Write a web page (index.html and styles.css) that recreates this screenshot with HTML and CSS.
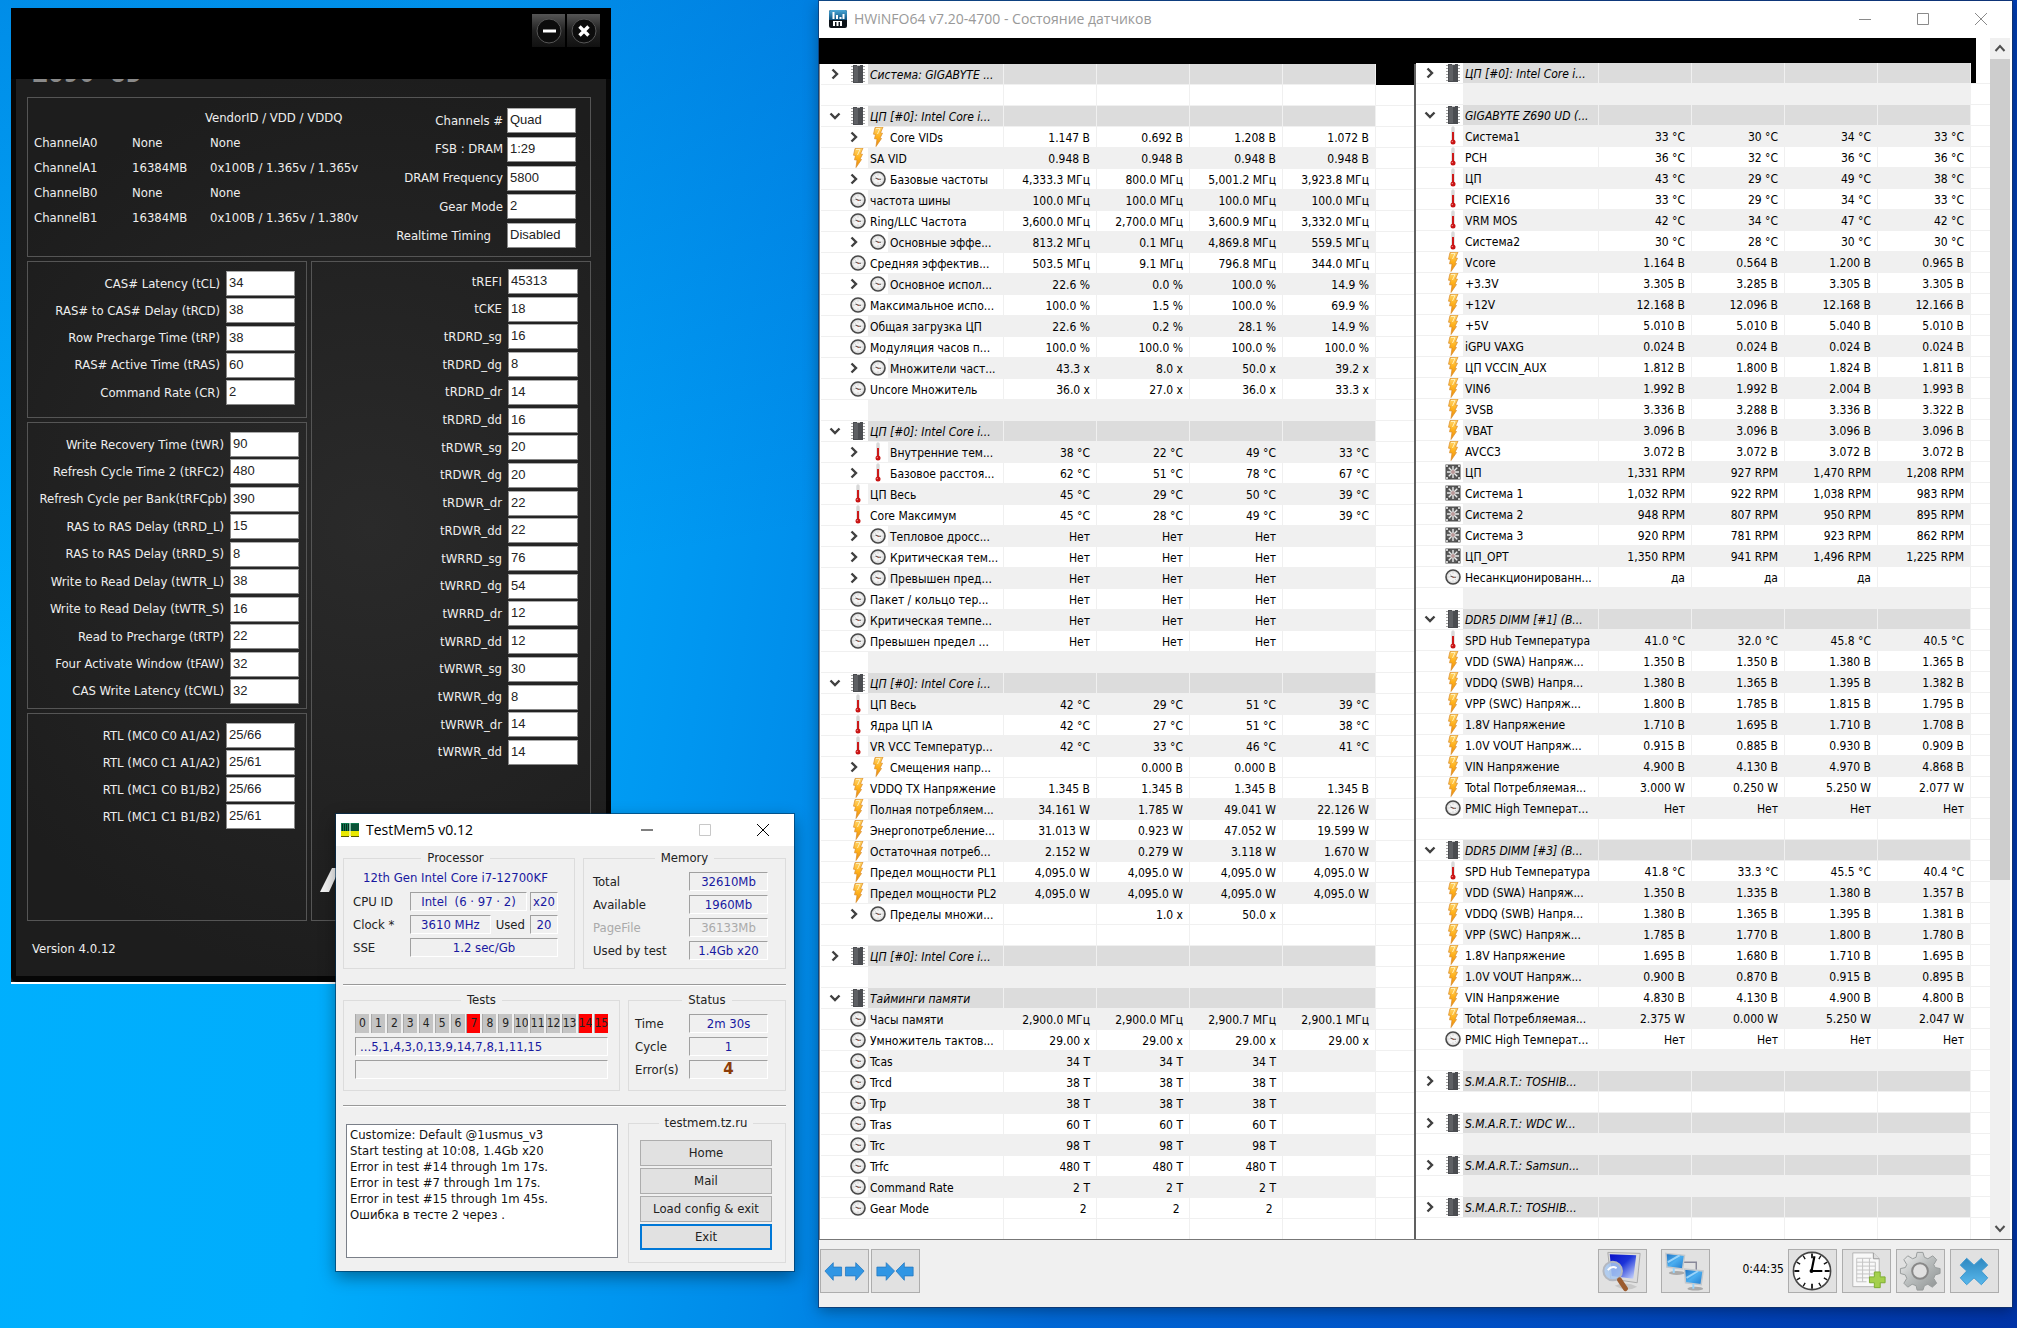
FILE: index.html
```html
<!DOCTYPE html>
<html lang="ru">
<head>
<meta charset="utf-8">
<title>HWiNFO64 v7.20-4700 - Состояние датчиков</title>
<link rel="stylesheet" href="styles.css">
</head>
<body>
<svg class="defs" aria-hidden="true">
  <defs>
    <linearGradient id="gold" x1="0" y1="0" x2="0" y2="1"><stop offset="0" stop-color="#ffd46a"/><stop offset=".5" stop-color="#ffb21c"/><stop offset="1" stop-color="#e88a10"/></linearGradient>
    <linearGradient id="sky" x1="0" y1="0" x2="1" y2="1"><stop offset="0" stop-color="#1d6fc0"/><stop offset=".5" stop-color="#4aaef0"/><stop offset="1" stop-color="#1f78cc"/></linearGradient>
    <linearGradient id="deep" x1="0" y1="0" x2="1" y2="1"><stop offset="0" stop-color="#0a10c8"/><stop offset=".45" stop-color="#1c34d8"/><stop offset="1" stop-color="#d8e4ff"/></linearGradient>
    <linearGradient id="steel" x1="0" y1="0" x2="1" y2="1"><stop offset="0" stop-color="#f4f4f4"/><stop offset=".5" stop-color="#b8bcbc"/><stop offset="1" stop-color="#8c9090"/></linearGradient>
    <linearGradient id="cross" x1="0" y1="0" x2="0" y2="1"><stop offset="0" stop-color="#2f88c0"/><stop offset="1" stop-color="#58b8ec"/></linearGradient>
    <linearGradient id="logo" x1="0" y1="0" x2="0" y2="1"><stop offset="0" stop-color="#4aa8d8"/><stop offset="1" stop-color="#0c4f7c"/></linearGradient>
  </defs>
  <symbol id="chip" viewBox="0 0 16 20"><path d="M1 2.500h14M1 5.500h14M1 8.500h14M1 11.500h14M1 14.500h14M1 17.500h14" stroke="#a4a4a4" stroke-width="1.200"/><rect x="3" y="1" width="10" height="18" fill="#4a4c50"/><rect x="4" y="2" width="4" height="16" fill="#5e6064"/><path d="M7 1h3v1H7z" fill="#ccc"/></symbol>
  <symbol id="bolt" viewBox="0 0 16 20"><path d="M5 .5 13 0l-2.500 6 2 .2-2.500 5 1.500.3L6 19.500 7 12l-2.500-.2L5.500 7.500 3.500 7.200z" fill="url(#gold)" stroke="#d98a28" stroke-width=".7"/><path d="M6 1.500h4L7.500 7" stroke="#fff0b8" fill="none"/></symbol>
  <symbol id="temp" viewBox="0 0 16 20"><path d="M8 2v11" stroke="#d8d8d8" stroke-width="3.400" stroke-linecap="round"/><path d="M8 6v10" stroke="#cc1818" stroke-width="2"/><circle cx="8" cy="16" r="2.500" fill="#c81414"/><circle cx="7.300" cy="15.500" r=".7" fill="#f08080"/></symbol>
  <symbol id="gauge" viewBox="0 0 16 16"><circle cx="8" cy="8" r="7" fill="#dcdcdc" stroke="#484848" stroke-width="1.600"/><circle cx="8" cy="8" r="5" fill="#f4f4f4"/><path d="M8 3.500v1M8 11.500v1M3.500 8h1M11.500 8h1M4.800 4.800l.7.700M10.500 10.500l.7.700" stroke="#aaa" stroke-width=".8"/><path d="m5.500 7 3 1.300h2.500" stroke="#555" fill="none" stroke-width="1.100"/><path d="m7.500 8 1.200.5" stroke="#c84020"/></symbol>
  <symbol id="fan" viewBox="0 0 16 16"><rect x=".5" y=".5" width="15" height="15" fill="#484848"/><circle cx="8" cy="8" r="7" fill="#5a5a5a"/><path d="M8 2v12M2 8h12M3.800 3.800l8.400 8.400M12.200 3.800l-8.400 8.400" stroke="#ececec" stroke-width="1.400"/><circle cx="8" cy="8" r="2" fill="#b89898"/><path d="M1 1h2v2H1zM13 1h2v2h-2zM1 13h2v2H1zM13 13h2v2h-2z" fill="#ccc"/></symbol>
  <symbol id="closed" viewBox="0 0 14 14"><path d="m4.500 2.500 4.500 4.500-4.500 4.500" fill="none" stroke="#404040" stroke-width="2.400"/></symbol>
  <symbol id="open" viewBox="0 0 14 14"><path d="m2.500 4.500 4.500 4.500 4.500-4.500" fill="none" stroke="#404040" stroke-width="2.400"/></symbol>
</svg>

<main class="desktop">

<section class="timing">
  <header class="timing-bar">
    <button class="gloss" aria-label="Minimize"><svg viewBox="0 0 33 32"><circle cx="17" cy="16" r="12" fill="#0c0c0c" stroke="#555"/><path d="M11 16h13" stroke="#fff" stroke-width="3"/></svg></button>
    <button class="gloss" aria-label="Close"><svg viewBox="0 0 33 32"><circle cx="17" cy="16" r="12" fill="#0c0c0c" stroke="#555"/><path d="m12.500 11.500 9 9m0-9-9 9" stroke="#fff" stroke-width="3.400"/></svg></button>
  </header>
  <div class="timing-body">
    <div class="board"><span>Z690 UD</span></div>
    <div class="panel slots">
      <div class="modules">
        <span></span><span></span><span class="vendor">VendorID / VDD / VDDQ</span>
        <span>ChannelA0</span><span>None</span><span>None</span>
        <span>ChannelA1</span><span>16384MB</span><span>0x100B / 1.365v / 1.365v</span>
        <span>ChannelB0</span><span>None</span><span>None</span>
        <span>ChannelB1</span><span>16384MB</span><span>0x100B / 1.365v / 1.380v</span>
      </div>
      <div class="fields mode">
        <label><span>Channels #</span><input readonly value="Quad"></label>
        <label><span>FSB : DRAM</span><input readonly value="1:29"></label>
        <label><span>DRAM Frequency</span><input readonly value="5800"></label>
        <label><span>Gear Mode</span><input readonly value="2"></label>
        <label class="inset"><span>Realtime Timing</span><input readonly value="Disabled"></label>
      </div>
    </div>
    <div class="columns">
      <div class="column">
        <div class="panel fields primary">
          <label><span>CAS# Latency (tCL)</span><input readonly value="34"></label>
          <label><span>RAS# to CAS# Delay (tRCD)</span><input readonly value="38"></label>
          <label><span>Row Precharge Time (tRP)</span><input readonly value="38"></label>
          <label><span>RAS# Active Time (tRAS)</span><input readonly value="60"></label>
          <label><span>Command Rate (CR)</span><input readonly value="2"></label>
        </div>
        <div class="panel fields secondary">
          <label><span>Write Recovery Time (tWR)</span><input readonly value="90"></label>
          <label><span>Refresh Cycle Time 2 (tRFC2)</span><input readonly value="480"></label>
          <label class="tight"><span>Refresh Cycle per Bank(tRFCpb)</span><input readonly value="390"></label>
          <label><span>RAS to RAS Delay (tRRD_L)</span><input readonly value="15"></label>
          <label><span>RAS to RAS Delay (tRRD_S)</span><input readonly value="8"></label>
          <label><span>Write to Read Delay (tWTR_L)</span><input readonly value="38"></label>
          <label><span>Write to Read Delay (tWTR_S)</span><input readonly value="16"></label>
          <label><span>Read to Precharge (tRTP)</span><input readonly value="22"></label>
          <label><span>Four Activate Window (tFAW)</span><input readonly value="32"></label>
          <label><span>CAS Write Latency (tCWL)</span><input readonly value="32"></label>
        </div>
        <div class="panel fields rtl">
          <label><span>RTL (MC0 C0 A1/A2)</span><input readonly value="25/66"></label>
          <label><span>RTL (MC0 C1 A1/A2)</span><input readonly value="25/61"></label>
          <label><span>RTL (MC1 C0 B1/B2)</span><input readonly value="25/66"></label>
          <label><span>RTL (MC1 C1 B1/B2)</span><input readonly value="25/61"></label>
        </div>
      </div>
      <div class="panel turnaround">
        <div class="fields">
          <label><span>tREFI</span><input readonly value="45313"></label>
          <label><span>tCKE</span><input readonly value="18"></label>
          <label><span>tRDRD_sg</span><input readonly value="16"></label>
          <label><span>tRDRD_dg</span><input readonly value="8"></label>
          <label><span>tRDRD_dr</span><input readonly value="14"></label>
          <label><span>tRDRD_dd</span><input readonly value="16"></label>
          <label><span>tRDWR_sg</span><input readonly value="20"></label>
          <label><span>tRDWR_dg</span><input readonly value="20"></label>
          <label><span>tRDWR_dr</span><input readonly value="22"></label>
          <label><span>tRDWR_dd</span><input readonly value="22"></label>
          <label><span>tWRRD_sg</span><input readonly value="76"></label>
          <label><span>tWRRD_dg</span><input readonly value="54"></label>
          <label><span>tWRRD_dr</span><input readonly value="12"></label>
          <label><span>tWRRD_dd</span><input readonly value="12"></label>
          <label><span>tWRWR_sg</span><input readonly value="30"></label>
          <label><span>tWRWR_dg</span><input readonly value="8"></label>
          <label><span>tWRWR_dr</span><input readonly value="14"></label>
          <label><span>tWRWR_dd</span><input readonly value="14"></label>
        </div>
        <svg class="brand" viewBox="0 0 40 24" aria-hidden="true"><path d="M0 24 12 0h8L9 24z" fill="#f4f4f4"/></svg>
      </div>
    </div>
    <footer class="version">Version 4.0.12</footer>
  </div>
</section>

<section class="testmem">
  <header class="titlebar">
    <svg class="ram" viewBox="0 0 18 14"><path d="M0 0h8.500v8H0zM9.500 0H18v8H9.500z" fill="#0f7a50"/><path d="M1.500 1v7M3.500 1v7M5.500 1v7M7.500 1v7M11 1v7M13 1v7M15 1v7M17 1v7" stroke="#062c1e"/><path d="M0 8h8.500v5H0zM9.500 8H18v5H9.500z" fill="#e8e800"/><path d="M0 13.500h8M10 13.500h8" stroke="#5a5a00"/></svg>
    <h2>TestMem5 v0.12</h2>
    <button aria-label="Minimize"><svg viewBox="0 0 12 12"><path d="M0 6h12" stroke="#000"/></svg></button>
    <button aria-label="Maximize" disabled><svg viewBox="0 0 12 12"><path d="M.5.5h11v11H.5z" stroke="#c8c8c8" fill="none"/></svg></button>
    <button aria-label="Close"><svg viewBox="0 0 12 12"><path d="m0 0 12 12M12 0 0 12" stroke="#000"/></svg></button>
  </header>
  <div class="tm-body">
    <div class="tm-row info">
      <fieldset class="cpu">
        <legend>Processor</legend>
        <output class="model">12th Gen Intel Core i7-12700KF</output>
        <div class="line"><span class="key">CPU ID</span><output class="well grow">Intel&nbsp; (6 · 97 · 2)</output><output class="well small">x20</output></div>
        <div class="line"><span class="key">Clock *</span><output class="well grow">3610 MHz</output><span class="used">Used</span><output class="well small">20</output></div>
        <div class="line"><span class="key">SSE</span><output class="well grow">1.2 sec/Gb</output></div>
      </fieldset>
      <fieldset class="mem">
        <legend>Memory</legend>
        <div class="line"><span class="key">Total</span><output class="well">32610Mb</output></div>
        <div class="line"><span class="key">Available</span><output class="well">1960Mb</output></div>
        <div class="line off"><span class="key">PageFile</span><output class="well">36133Mb</output></div>
        <div class="line"><span class="key">Used by test</span><output class="well">1.4Gb x20</output></div>
      </fieldset>
    </div>
    <hr>
    <div class="tm-row runs">
      <fieldset class="tests">
        <legend>Tests</legend>
        <div class="cells"><span>0</span><span>1</span><span>2</span><span>3</span><span>4</span><span>5</span><span>6</span><span class="bad">7</span><span>8</span><span>9</span><span>10</span><span>11</span><span>12</span><span>13</span><span class="bad">14</span><span class="bad">15</span></div>
        <output class="well seq">...5,1,4,3,0,13,9,14,7,8,1,11,15</output>
        <output class="well"></output>
      </fieldset>
      <fieldset class="status">
        <legend>Status</legend>
        <div class="line"><span class="key">Time</span><output class="well">2m 30s</output></div>
        <div class="line"><span class="key">Cycle</span><output class="well">1</output></div>
        <div class="line"><span class="key">Error(s)</span><output class="well errors">4</output></div>
      </fieldset>
    </div>
    <hr>
    <div class="tm-row tail">
      <textarea class="log" readonly aria-label="Log">Customize: Default @1usmus_v3
Start testing at 10:08, 1.4Gb x20
Error in test #14 through 1m 17s.
Error in test #7 through 1m 17s.
Error in test #15 through 1m 45s.
Ошибка в тесте 2 через .</textarea>
      <fieldset class="links">
        <legend>testmem.tz.ru</legend>
        <button>Home</button>
        <button>Mail</button>
        <button>Load config &amp; exit</button>
        <button class="default">Exit</button>
      </fieldset>
    </div>
  </div>
</section>

<section class="hwinfo">
  <header class="titlebar">
    <svg class="app" viewBox="0 0 18 18"><rect width="18" height="18" rx="2" fill="#0c1218"/><path d="M2 0h14a2 2 0 0 1 2 2v8H0V2a2 2 0 0 1 2-2z" fill="url(#logo)"/><path d="M4.500 2v7M8 5v4M11.500 7v2M14.500 4v5M5 12v4M8.500 12v4M12 12v4" stroke="#fff" stroke-width="2"/><path d="M4 11.500h9" stroke="#fff"/></svg>
    <h2>HWiNFO64 v7.20-4700 - Состояние датчиков</h2>
    <button aria-label="Minimize"><svg viewBox="0 0 12 12"><path d="M0 6.500h12" stroke="#8a8a8a"/></svg></button>
    <button aria-label="Maximize"><svg viewBox="0 0 12 12"><path d="M.5.5h11v11H.5z" stroke="#8a8a8a" fill="none"/></svg></button>
    <button aria-label="Close"><svg viewBox="0 0 12 12"><path d="m0 0 12 12M12 0 0 12" stroke="#8a8a8a"/></svg></button>
  </header>
  <div class="panes">
    <div class="pane first"><div class="mask"></div><table id="sensors-left"></table></div>
    <div class="pane second"><div class="mask"></div><table id="sensors-right"></table></div>
    <div class="scroll">
      <svg viewBox="0 0 20 21"><path d="m5.500 13 4.500-5 4.500 5" stroke="#505050" stroke-width="2" fill="none"/></svg>
      <div class="thumb"></div>
      <svg viewBox="0 0 20 21"><path d="m5.500 8 4.500 5 4.500-5" stroke="#505050" stroke-width="2" fill="none"/></svg>
    </div>
  </div>
  <footer class="toolbar">
    <button aria-label="Expand columns"><svg viewBox="0 0 48 42"><path d="M4 21 12.500 12.500V17H21v9h-8.500v4.500zM44 21l-8.500-8.500V17H25v9h10.500v4.500z" fill="#3096e4" stroke="#2478c0" stroke-width=".8"/></svg></button>
    <button aria-label="Shrink columns"><svg viewBox="0 0 48 42"><path d="M23 21l-8.500-8.500V17H5v9h9.500v4.500zM24.500 21 33 12.500V17h9v9h-9v4.500z" fill="#3096e4" stroke="#2478c0" stroke-width=".8"/></svg></button>
    <span class="spring"></span>
    <button aria-label="Summary"><svg viewBox="0 0 48 42"><path d="M16 36q12-5 23 1-10 6-23-1z" fill="#c8c8c8"/><path d="m9 2 33 1-3 30-27-4z" fill="#dcdcdc" stroke="#aaa"/><path d="m11 4 27 1-3 24-22-3z" fill="url(#deep)"/><circle cx="14" cy="21" r="9.500" fill="#a8c8f0" fill-opacity=".85" stroke="#b4b8c0" stroke-width="2"/><path d="M9 20q4-5 9-2" stroke="#fff" fill="none" stroke-width="2"/><path d="m21 30 6 9" stroke="#9c5c30" stroke-width="5" stroke-linecap="round"/></svg></button>
    <button class="gap" aria-label="Network"><svg viewBox="0 0 48 42"><path d="M22 12h13v10" fill="none" stroke="#889" stroke-width="1.500"/><ellipse cx="15" cy="23" rx="8" ry="2" fill="#aaa"/><path d="m4 3 19 2-2 14-16-2z" fill="url(#sky)" stroke="#c4c8cc" stroke-width="1.500"/><path d="m6 12 12-7M12 18v5" stroke="#9ad4fa" stroke-width="2"/><ellipse cx="34" cy="39" rx="8" ry="2" fill="#aaa"/><path d="m23 19 19 2-2 14-16-2z" fill="url(#sky)" stroke="#c4c8cc" stroke-width="1.500"/><path d="m25 28 12-7M32 34v5" stroke="#9ad4fa" stroke-width="2"/></svg></button>
    <time class="uptime">0:44:35</time>
    <button aria-label="Reset clock"><svg viewBox="0 0 48 42"><circle cx="23.500" cy="21" r="19" fill="#fff" stroke="#444" stroke-width="1.600"/><g stroke="#111" stroke-width="1.800"><path d="M23.500 3v5M23.500 34v5M5.500 21h5M36.500 21h5"/><path d="m14.500 5.400 2 3.500M30.500 33.100l2 3.500M7.900 12l3.500 2M35.600 28l3.500 2M32.500 5.400l-2 3.500M16.500 33.100l-2 3.500M39.100 12l-3.500 2M11.400 28l-3.500 2" stroke-width="1.400"/></g><path d="M23 21 26 6M23 21h11" stroke="#000" stroke-width="2.200"/><circle cx="23" cy="21" r="2"/></svg></button>
    <button aria-label="Log to file"><svg viewBox="0 0 48 42"><path d="M10 2.500h21l6 6V37H10z" fill="#f8f8f8" stroke="#b4b4b4"/><path d="M31 2.500v6h6" fill="#ddd" stroke="#999"/><path d="M14 8h15M14 12h19M14 16h19M14 20h19M14 24h19M14 28h19M14 32h10M14 8v24M20 8v24M27 8v20M33 12v16" stroke="#c4c4c4"/><path d="M32 22h6v5h5v6h-5v5h-6v-5h-5v-6h5z" fill="#a4d04c" stroke="#7cac30"/></svg></button>
    <button aria-label="Settings"><svg viewBox="0 0 48 42"><path d="m20.500 2 6 0 1.500 5 3.500 1.500 5-3 4 4-3 5 1.500 3 5 1v5l-5 1.500-1.500 3.500 3 5-4.500 4-4.500-3-3.500 1.500-1.500 4.500h-6l-1-4.500-4-1.500-4.500 3-4-4 3-5-1.500-3.500-5-1.500v-5l5-1 1.500-3-3-5 4-4 5 3L19.500 7z" fill="url(#steel)" stroke="#989c9c"/><circle cx="23.500" cy="21" r="8" fill="#e1e1e1" stroke="#888" stroke-width="2"/></svg></button>
    <button aria-label="Close sensors"><svg viewBox="0 0 48 42"><path d="m16 8 7.500 7L31 8l6.500 7-6.500 6 6.500 7-6.500 7-7.500-7-7.500 7-6.500-7 6.500-7-6.500-6z" fill="url(#cross)" stroke="#3c98d0"/></svg></button>
  </footer>
</section>

</main>
<script src="sensors.js"></script>
</body>
</html>
```
FILE: styles.css
```css
* { box-sizing: border-box; }

body {
  margin: 0;
  font: 12px/16px "DejaVu Sans Condensed", "DejaVu Sans", sans-serif;
  color: #000;
}

h2, hr, fieldset, legend, input, textarea, button { margin: 0; font: inherit; }
button { padding: 0; }
.defs { position: absolute; width: 0; height: 0; }

.desktop {
  position: relative;
  min-height: 100vh;
  overflow: hidden;
  background:
    linear-gradient(170deg, rgba(0, 60, 180, .3), rgba(0, 60, 180, 0) 40%),
    linear-gradient(98deg, #00b0fe 0, #00adfc 22%, #0096f0 36%, #008ae8 43%, #0068d6 56%, #0050c6 76%, #0034a8 100%);
}

/* ---- memory timing window ---- */
.timing {
  position: absolute;
  left: 11px;
  top: 8px;
  width: 600px;
  background: #1e1e1e;
  color: #eee;
  font-size: 13px;
  border-bottom: 2px solid #fff;
}
.timing-bar {
  display: flex;
  justify-content: flex-end;
  gap: 2px;
  height: 71px;
  padding: 6px 11px 0 0;
  background: #000;
}
.gloss {
  width: 33px;
  height: 33px;
  border: 0;
  background: linear-gradient(#555, #222 50%, #111);
}
.gloss svg { display: block; width: 33px; height: 32px; }
.timing-body {
  padding: 0 15px 10px 11px;
  border: solid #060606;
  border-width: 0 5px 6px;
  border-radius: 0 0 6px 6px;
  background: radial-gradient(circle at 60% 50%, #2a2a2a, #1d1d1d 80%);
}
.board { height: 18px; overflow: hidden; }
.board span {
  display: block;
  padding-left: 5px;
  margin-top: -18px;
  font: bold 26px/24px "DejaVu Sans Mono", monospace;
  color: #8a8a8a;
}
.panel { border: 1px solid #555; }
.slots { display: flex; justify-content: space-between; height: 160px; }
.modules {
  display: grid;
  grid-template-columns: 98px 78px 170px;
  grid-auto-rows: 25px;
  align-content: start;
  padding: 7px 0 0 6px;
  line-height: 25px;
  white-space: nowrap;
}
.vendor { margin-left: -5px; }
.fields { display: flex; flex-direction: column; justify-content: space-between; }
.fields label { display: flex; justify-content: flex-end; align-items: center; gap: 6px; white-space: nowrap; }
.fields input {
  width: 69px;
  height: 25px;
  padding: 0 2px 2px;
  border: 1px solid #888;
  border-top: 1px solid #aaa;
  background: #fff;
  color: #222;
  font: 13px/20px "Liberation Sans", sans-serif;
}
.mode { padding: 10px 14px 8px 0; }
.mode label { gap: 4px; }
.mode .inset { gap: 16px; }
.columns { display: grid; grid-template-columns: 280px 1fr; gap: 4px; padding-top: 4px; }
.column { display: flex; flex-direction: column; gap: 4px; }
.primary { height: 157px; padding: 9px 11px 12px 0; }
.secondary { height: 287px; padding: 9px 7px 4px 0; }
.secondary .tight { gap: 3px; }
.rtl { height: 208px; padding: 9px 11px 0 0; justify-content: flex-start; gap: 2px; }
.turnaround { position: relative; padding: 7px 12px 0 0; }
.turnaround .fields { height: 496px; }
.turnaround input { width: 70px; }
.brand { position: absolute; left: 8px; bottom: 28px; width: 40px; height: 24px; }
.version { padding: 20px 5px 9px; }

/* ---- shared window chrome ---- */
.titlebar { display: flex; align-items: center; background: #fff; }
.titlebar h2 { flex: 1; font-weight: 400; white-space: nowrap; }
.titlebar button { display: grid; place-items: center; border: 0; background: none; }
.titlebar button svg { width: 12px; height: 12px; }

/* ---- TestMem5 ---- */
.testmem {
  position: absolute;
  left: 336px;
  top: 814px;
  width: 458px;
  background: #f0f0f0;
  font-size: 13px;
  box-shadow: 0 0 0 1px rgba(0, 50, 90, .6), 0 6px 16px rgba(0, 0, 0, .4);
}
.testmem .titlebar { height: 32px; padding: 0 2px 0 5px; }
.testmem .titlebar h2 { padding-left: 7px; font: 14px/20px "Open Sans", sans-serif; }
.testmem .titlebar button { width: 58px; height: 32px; }
.ram { width: 18px; height: 14px; }
.tm-body { display: flex; flex-direction: column; padding: 4px 8px 8px 7px; color: #222; }
.tm-row { display: grid; gap: 8px; }
.info { grid-template-columns: 1fr 203px; height: 119px; }
.runs { grid-template-columns: 1fr 158px; height: 99px; }
.tail { grid-template-columns: 1fr 158px; height: 148px; }
.testmem hr { width: 100%; height: 2px; border: 0; border-top: 1px solid #999; border-bottom: 1px solid #fff; }
.info + hr { margin: 15px 0 6px; }
.runs + hr { margin: 14px 0 8px; }
.testmem fieldset {
  min-width: 0;
  padding: 0 9px;
  border: 1px solid #dcdcdc;
  display: flex;
  flex-direction: column;
  gap: 4px;
}
.testmem legend { margin: 0 auto; padding: 0 6px; }
.model { display: block; text-align: center; color: #1818a0; line-height: 20px; }
.line { display: flex; gap: 3px; align-items: center; }
.key { flex: none; width: 54px; }
.well {
  display: block;
  height: 19px;
  border: 1px solid;
  border-color: #a0a0a0 #fff #fff #a0a0a0;
  color: #1818a0;
  line-height: 17px;
  text-align: center;
  white-space: nowrap;
}
.grow { flex: 1; }
.small { width: 28px; }
.used { padding: 0 2px; }
.testmem .cpu { padding: 2px 16px 0 9px; }
.testmem .mem { padding: 6px 9px 0; }
.mem .key { width: 93px; }
.mem .well, .status .well { width: 79px; }
.off, .off .well { color: #aaa; }
.testmem .tests { padding: 6px 11px 0; }
.cells { display: grid; grid-template-columns: repeat(16, 14px); justify-content: space-between; height: 19px; }
.cells span { display: flex; justify-content: center; overflow: hidden; border-left: 1px solid #aaa; background: #c4c4c4; font-size: 12px; line-height: 19px; }
.cells .bad { background: #f00; }
.tests .seq { padding-left: 4px; text-align: left; }
.testmem .status { padding: 6px 6px 0; }
.status .key { width: 51px; }
.errors { font: bold 15px/17px "DejaVu Sans", sans-serif; color: #8c3c08; }
.log {
  margin: 9px 2px 5px 3px;
  padding: 2px 3px;
  border: 1px solid #7a7f88;
  background: #fff;
  color: #111;
  resize: none;
  overflow: hidden;
}
.testmem .links { padding: 9px 13px 0 11px; gap: 2px; }
.links button { flex: none; height: 26px; border: 1px solid #adadad; background: #e1e1e1; color: #222; }
.links .default { border: 2px solid #0078d7; }

/* ---- HWiNFO64 ---- */
.hwinfo {
  position: absolute;
  left: 819px;
  right: 5px;
  top: 1px;
  background: #f0f0f0;
  box-shadow: 0 0 0 1px rgba(20, 50, 100, .7), 0 4px 14px rgba(0, 0, 0, .35);
}
.hwinfo .titlebar { height: 37px; padding: 0 2px 2px 10px; }
.hwinfo .titlebar h2 { padding-left: 7px; font: 14px/20px "Open Sans", sans-serif; color: #999; }
.hwinfo .titlebar button { width: 58px; height: 35px; }
.app { width: 18px; height: 18px; }
.panes { display: flex; background: #fff; border-bottom: 1px solid #777; padding-right: 2px; }
.pane { min-width: 0; }
.first { flex: 593 1 0; border-left: 1px solid #888; padding-left: 1px; border-right: 2px solid #606060; }
.second { flex: 574 1 0; }
.first .mask { height: 26px; margin: 0 -2px; background: #000; }
.second .mask { height: 25px; margin-right: 14px; background: #000; }
.pane table { width: 100%; table-layout: fixed; border-collapse: separate; border-spacing: 0; }
.pane th, .pane td {
  height: 21px;
  padding: 2px 6px 0 0;
  border: solid #f0f0f0;
  border-width: 0 1px 1px 0;
  font-weight: 400;
  line-height: 18px;
  text-align: right;
  white-space: nowrap;
  overflow: hidden;
}
.pane .lead { border-right: 0; padding: 0 2px 0 0; background: #fff; }
.pane .rest { border-right: 0; background: #fff; }
.pane th { padding: 2px 0 0 2px; text-align: left; }
.stripe th, .stripe td { background: #f0f0f0; }
.head th, .head td { background: #dcdcdc; }
.head th { font-style: italic; }
.pane .nest th { padding-left: 0; }
.nest .pad { display: inline-block; width: 20px; height: 20px; margin: -2px 2px 0 0; padding-left: 2px; background: #fff; vertical-align: top; }
.lead div { display: flex; align-items: center; justify-content: flex-end; height: 20px; }
.head .lead div { justify-content: space-between; padding-left: 7px; }
.nest .lead div { padding-right: 5px; }
.c-lead { width: 47px; }
.c-name { width: 136px; }
.c-value { width: 93px; }
.glyph { display: block; width: 16px; height: 20px; }
.twist { display: block; width: 14px; height: 14px; }
.pane .end th, .pane .end td { border-bottom: 0; }
.first .end th, .first .end td { height: 20px; }
.first tr:first-child .rest { background: #000; border-bottom-color: #000; }
.second tr:first-child .rest { background: linear-gradient(90deg, #000 5px, #fff 5px); }
.scroll { display: flex; flex-direction: column; flex: none; width: 20px; background: #f0f0f0; }
.scroll svg { width: 20px; height: 21px; }
.thumb { height: 821px; margin-bottom: auto; background: #cdcdcd; }

.toolbar { display: flex; align-items: center; gap: 2px; height: 67px; padding: 0 13px 5px 1px; }
.toolbar button { width: 49px; height: 44px; border: 1px solid #adadad; background: #e1e1e1; }
.toolbar button svg { display: block; width: 47px; height: 42px; }
.toolbar .spring { flex: 1; }
.toolbar .gap { margin-left: 12px; }
.uptime { width: 74px; padding: 0 2px 4px 0; text-align: right; }
.uptime ~ button { margin-right: 3px; }
.uptime ~ button:last-child { margin-right: 0; }
```
FILE: sensors.js
```js
// Row notation: "flags|name|current|min|max|avg".
// Flags: > collapsed group, v expanded group, + nested sensor, = striped,
// b voltage/power, t temperature, c gauge, f fan; "-" is a spacer row.
const left = `>|Система: GIGABYTE ...
-
v|ЦП [#0]: Intel Core i...
+b|Core VIDs|1.147 В|0.692 В|1.208 В|1.072 В
=b|SA VID|0.948 В|0.948 В|0.948 В|0.948 В
+c|Базовые частоты|4,333.3 МГц|800.0 МГц|5,001.2 МГц|3,923.8 МГц
=c|частота шины|100.0 МГц|100.0 МГц|100.0 МГц|100.0 МГц
c|Ring/LLC Частота|3,600.0 МГц|2,700.0 МГц|3,600.9 МГц|3,332.0 МГц
=+c|Основные эффе...|813.2 МГц|0.1 МГц|4,869.8 МГц|559.5 МГц
c|Средняя эффектив...|503.5 МГц|9.1 МГц|796.8 МГц|344.0 МГц
=+c|Основное испол...|22.6 %|0.0 %|100.0 %|14.9 %
c|Максимальное испо...|100.0 %|1.5 %|100.0 %|69.9 %
=c|Общая загрузка ЦП|22.6 %|0.2 %|28.1 %|14.9 %
c|Модуляция часов п...|100.0 %|100.0 %|100.0 %|100.0 %
=+c|Множители част...|43.3 x|8.0 x|50.0 x|39.2 x
c|Uncore Множитель|36.0 x|27.0 x|36.0 x|33.3 x
=-
v|ЦП [#0]: Intel Core i...
=+t|Внутренние тем...|38 °C|22 °C|49 °C|33 °C
+t|Базовое расстоя...|62 °C|51 °C|78 °C|67 °C
=t|ЦП Весь|45 °C|29 °C|50 °C|39 °C
t|Core Максимум|45 °C|28 °C|49 °C|39 °C
=+c|Тепловое дросс...|Нет|Нет|Нет|
+c|Критическая тем...|Нет|Нет|Нет|
=+c|Превышен пред...|Нет|Нет|Нет|
c|Пакет / кольцо тер...|Нет|Нет|Нет|
=c|Критическая темпе...|Нет|Нет|Нет|
c|Превышен предел ...|Нет|Нет|Нет|
=-
v|ЦП [#0]: Intel Core i...
=t|ЦП Весь|42 °C|29 °C|51 °C|39 °C
t|Ядра ЦП IA|42 °C|27 °C|51 °C|38 °C
=t|VR VCC Температур...|42 °C|33 °C|46 °C|41 °C
+b|Смещения напр...||0.000 В|0.000 В|
b|VDDQ TX Напряжение|1.345 В|1.345 В|1.345 В|1.345 В
=b|Полная потребляем...|34.161 W|1.785 W|49.041 W|22.126 W
b|Энергопотребление...|31.013 W|0.923 W|47.052 W|19.599 W
=b|Остаточная потреб...|2.152 W|0.279 W|3.118 W|1.670 W
b|Предел мощности PL1|4,095.0 W|4,095.0 W|4,095.0 W|4,095.0 W
=b|Предел мощности PL2|4,095.0 W|4,095.0 W|4,095.0 W|4,095.0 W
+c|Пределы множи...||1.0 x|50.0 x|
-
>|ЦП [#0]: Intel Core i...
=-
v|Тайминги памяти
=c|Часы памяти|2,900.0 МГц|2,900.0 МГц|2,900.7 МГц|2,900.1 МГц
c|Умножитель тактов...|29.00 x|29.00 x|29.00 x|29.00 x
=c|Tcas|34 T|34 T|34 T|
c|Trcd|38 T|38 T|38 T|
=c|Trp|38 T|38 T|38 T|
c|Tras|60 T|60 T|60 T|
=c|Trc|98 T|98 T|98 T|
c|Trfc|480 T|480 T|480 T|
=c|Command Rate|2 T|2 T|2 T|
c|Gear Mode|2&nbsp;|2&nbsp;|2&nbsp;|
-`;

const right = `>|ЦП [#0]: Intel Core i...
=-
v|GIGABYTE Z690 UD (...
=t|Система1|33 °C|30 °C|34 °C|33 °C
t|PCH|36 °C|32 °C|36 °C|36 °C
=t|ЦП|43 °C|29 °C|49 °C|38 °C
t|PCIEX16|33 °C|29 °C|34 °C|33 °C
=t|VRM MOS|42 °C|34 °C|47 °C|42 °C
t|Система2|30 °C|28 °C|30 °C|30 °C
=b|Vcore|1.164 В|0.564 В|1.200 В|0.965 В
b|+3.3V|3.305 В|3.285 В|3.305 В|3.305 В
=b|+12V|12.168 В|12.096 В|12.168 В|12.166 В
b|+5V|5.010 В|5.010 В|5.040 В|5.010 В
=b|iGPU VAXG|0.024 В|0.024 В|0.024 В|0.024 В
b|ЦП VCCIN_AUX|1.812 В|1.800 В|1.824 В|1.811 В
=b|VIN6|1.992 В|1.992 В|2.004 В|1.993 В
b|3VSB|3.336 В|3.288 В|3.336 В|3.322 В
=b|VBAT|3.096 В|3.096 В|3.096 В|3.096 В
b|AVCC3|3.072 В|3.072 В|3.072 В|3.072 В
=f|ЦП|1,331 RPM|927 RPM|1,470 RPM|1,208 RPM
f|Система 1|1,032 RPM|922 RPM|1,038 RPM|983 RPM
=f|Система 2|948 RPM|807 RPM|950 RPM|895 RPM
f|Система 3|920 RPM|781 RPM|923 RPM|862 RPM
=f|ЦП_OPT|1,350 RPM|941 RPM|1,496 RPM|1,225 RPM
c|Несанкционированн...|да|да|да|
=-
v|DDR5 DIMM [#1] (B...
=t|SPD Hub Температура|41.0 °C|32.0 °C|45.8 °C|40.5 °C
b|VDD (SWA) Напряж...|1.350 В|1.350 В|1.380 В|1.365 В
=b|VDDQ (SWB) Напря...|1.380 В|1.365 В|1.395 В|1.382 В
b|VPP (SWC) Напряж...|1.800 В|1.785 В|1.815 В|1.795 В
=b|1.8V Напряжение|1.710 В|1.695 В|1.710 В|1.708 В
b|1.0V VOUT Напряж...|0.915 В|0.885 В|0.930 В|0.909 В
=b|VIN Напряжение|4.900 В|4.130 В|4.970 В|4.868 В
b|Total Потребляемая...|3.000 W|0.250 W|5.250 W|2.077 W
=c|PMIC High Температ...|Нет|Нет|Нет|Нет
-
v|DDR5 DIMM [#3] (B...
t|SPD Hub Температура|41.8 °C|33.3 °C|45.5 °C|40.4 °C
=b|VDD (SWA) Напряж...|1.350 В|1.335 В|1.380 В|1.357 В
b|VDDQ (SWB) Напря...|1.380 В|1.365 В|1.395 В|1.381 В
=b|VPP (SWC) Напряж...|1.785 В|1.770 В|1.800 В|1.780 В
b|1.8V Напряжение|1.695 В|1.680 В|1.710 В|1.695 В
=b|1.0V VOUT Напряж...|0.900 В|0.870 В|0.915 В|0.895 В
b|VIN Напряжение|4.830 В|4.130 В|4.900 В|4.800 В
=b|Total Потребляемая...|2.375 W|0.000 W|5.250 W|2.047 W
c|PMIC High Температ...|Нет|Нет|Нет|Нет
=-
>|S.M.A.R.T.: TOSHIB...
-
>|S.M.A.R.T.: WDC W...
=-
>|S.M.A.R.T.: Samsun...
=-
>|S.M.A.R.T.: TOSHIB...
-`;

const icons = { b: "bolt", t: "temp", c: "gauge", f: "fan" };
const use = (id, cls) => `<svg class="${cls}" aria-hidden="true"><use href="#${id}"/></svg>`;

function render(id, text) {
  const lines = text.split("\n");
  const rows = lines.map((line, i) => {
    const [flags, name = "", ...values] = line.split("|");
    const has = (f) => flags.includes(f);
    const group = has(">") || has("v");
    const spacer = has("-");
    const nested = has("+");
    const kind = Object.keys(icons).find(has);
    const cls = [
      group && "head",
      has("=") && "stripe",
      nested && "nest",
      i === lines.length - 1 && "end",
    ].filter(Boolean).join(" ");
    const twist = group || nested ? use(has("v") ? "open" : "closed", "twist") : "";
    const icon = spacer ? "" : use(group ? "chip" : icons[kind], "glyph");
    const lead = nested ? twist : twist + icon;
    const label = nested ? `<span class="pad">${icon}</span>${name}` : name;
    const cells = [0, 1, 2, 3].map((n) => `<td>${values[n] || ""}</td>`).join("");
    return `<tr class="${cls}"><td class="lead"><div>${lead}</div></td><th scope="row">${label}</th>${cells}<td class="rest"></td></tr>`;
  });
  document.getElementById(id).innerHTML =
    `<colgroup><col class="c-lead"><col class="c-name"><col class="c-value"><col class="c-value"><col class="c-value"><col class="c-value"><col></colgroup><tbody>${rows.join("")}</tbody>`;
}

render("sensors-left", left);
render("sensors-right", right);
```
